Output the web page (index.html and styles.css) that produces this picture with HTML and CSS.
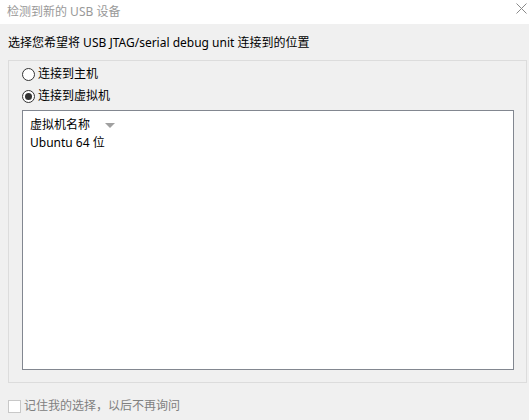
FILE: index.html
```html
<!DOCTYPE html>
<html lang="zh-CN">
<head>
<meta charset="utf-8">
<title>检测到新的 USB 设备</title>
<link rel="stylesheet" href="styles.css">
</head>
<body>
<div class="window">
  <div class="titlebar">
    <span class="title">检测到新的 USB 设备</span>
    <svg class="close" width="11" height="11" viewBox="0 0 11 11"><path d="M0.5 0.5 L10.5 10.5 M10.5 0.5 L0.5 10.5" stroke="#8a8a8a" stroke-width="1" fill="none"/></svg>
  </div>
  <div class="body">
    <p class="prompt">选择您希望将 USB JTAG/serial debug unit 连接到的位置</p>
    <div class="group">
      <label class="option"><span class="radio"></span>连接到主机</label>
      <label class="option"><span class="radio checked"></span>连接到虚拟机</label>
      <div class="listbox">
        <div class="list-header">虚拟机名称<span class="sort"></span></div>
        <div class="list-item">Ubuntu 64 位</div>
      </div>
    </div>
    <label class="remember"><span class="checkbox"></span>记住我的选择，以后不再询问</label>
  </div>
</div>
</body>
</html>
```
FILE: styles.css
```css
html, body {
  margin: 0;
  padding: 0;
}
body {
  width: 529px;
  height: 420px;
  background: #f0f0f0;
  font-family: "Noto Sans", "Noto Sans CJK SC", sans-serif;
  font-size: 12px;
  color: #000;
  overflow: hidden;
}
.titlebar {
  height: 24px;
  background: #fff;
  display: flex;
  align-items: center;
  justify-content: space-between;
  padding: 0 2px 0 7px;
  box-sizing: border-box;
}
.title {
  color: #999;
  line-height: 16px;
  margin-top: -1px;
}
.close {
  align-self: flex-start;
  margin-top: 3px;
}
.body {
  display: flex;
  flex-direction: column;
}
.prompt {
  margin: 11px 0 0 8px;
  line-height: 16px;
}
.group {
  margin: 9px 2px 0 8px;
  height: 323px;
  box-sizing: border-box;
  border: 1px solid #dcdcdc;
  display: flex;
  flex-direction: column;
  padding: 2px 12px 12px 13px;
}
.option {
  display: flex;
  align-items: center;
  line-height: 16px;
  height: 22px;
}
.radio {
  width: 13px;
  height: 13px;
  box-sizing: border-box;
  border: 1px solid #333;
  border-radius: 50%;
  background: #fff;
  margin-right: 3px;
  display: flex;
  align-items: center;
  justify-content: center;
}
.radio.checked::after {
  content: "";
  width: 7px;
  height: 7px;
  border-radius: 50%;
  background: #333;
}
.listbox {
  margin-top: 3px;
  flex: 1;
  background: #fff;
  border: 1px solid #828790;
  padding: 4px 7px;
}
.list-header {
  display: flex;
  align-items: center;
  line-height: 16px;
  height: 20px;
}
.sort {
  width: 0;
  height: 0;
  border-left: 5px solid transparent;
  border-right: 5px solid transparent;
  border-top: 5px solid #a0a0a0;
  margin-left: 15px;
}
.list-item {
  line-height: 16px;
  height: 20px;
}
.remember {
  display: flex;
  align-items: center;
  margin: 15px 0 0 8px;
  color: #808080;
  line-height: 16px;
}
.checkbox {
  width: 13px;
  height: 13px;
  box-sizing: border-box;
  border: 1px solid #c8c8c8;
  background: #fff;
  margin-right: 3px;
}
```
